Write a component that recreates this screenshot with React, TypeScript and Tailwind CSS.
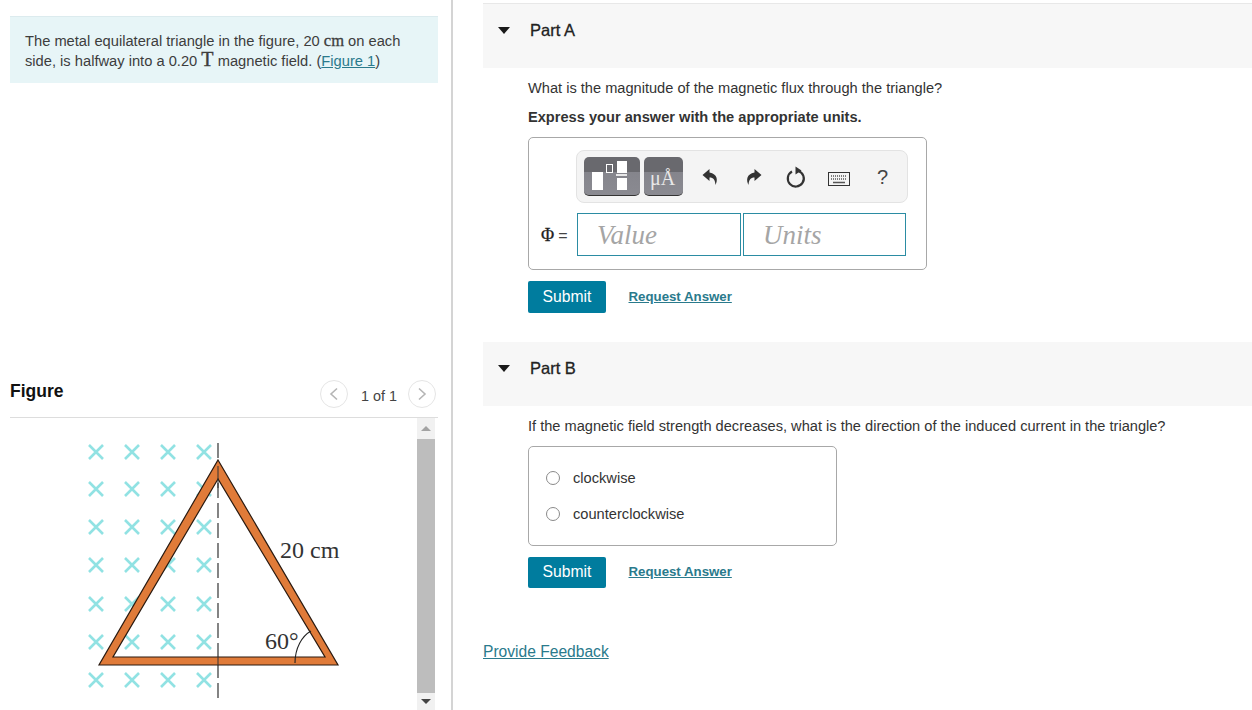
import React from "react";

const sans = "font-['Liberation_Sans',Arial,sans-serif]";
const serif = "font-['Liberation_Serif','Times_New_Roman',serif]";

function Crosses() {
  const xs = [96, 132, 168, 204];
  const ys = [452, 489, 527, 565, 604, 642, 680];
  return (
    <g stroke="#86dfe0" strokeWidth="2.6" opacity="0.9">
      {ys.flatMap((y) =>
        xs.map((x) => (
          <path key={`${x}-${y}`} d={`M${x - 7} ${y - 7}L${x + 7} ${y + 7}M${x + 7} ${y - 7}L${x - 7} ${y + 7}`} />
        ))
      )}
    </g>
  );
}

function Figure() {
  return (
    <svg viewBox="10 418 407 292" className="h-[292px] w-[407px] shrink-0">
      <Crosses />
      <path d="M218 443V700" stroke="#333" strokeWidth="1.2" strokeDasharray="15 5" fill="none" />
      <path fillRule="evenodd" d="M218 460L338 665H99ZM218 479L113 657H325Z" fill="#e07b39" stroke="#2a1a10" strokeWidth="1.2" />
      <path d="M218 466V488M218 657V665" stroke="#333" strokeWidth="1" />
      <text x="280" y="558" fontFamily="'Liberation Serif',serif" fontSize="24" fill="#333">20 cm</text>
      <text x="265" y="649" fontFamily="'Liberation Serif',serif" fontSize="24" fill="#333">60°</text>
      <path d="M295 663C295 648 302 636 311 631" stroke="#222" strokeWidth="1.1" fill="none" />
    </svg>
  );
}

function Scrollbar() {
  return (
    <div className="flex h-[292px] w-[18px] flex-col items-center bg-[#f1f1f1]">
      <div className="flex h-[21px] w-full items-center justify-center">
        <div className="h-0 w-0 border-x-[5px] border-b-[5px] border-x-transparent border-b-[#a3a3a3]" />
      </div>
      <div className="h-[254px] w-full bg-[#bdbdbd]" />
      <div className="flex grow items-center justify-center">
        <div className="h-0 w-0 border-x-[5px] border-t-[5px] border-x-transparent border-t-[#444]" />
      </div>
    </div>
  );
}

function PagerBtn({ dir }: { dir: "l" | "r" }) {
  return (
    <div className="flex h-[28px] w-[28px] items-center justify-center rounded-full border border-[#e5e5e5] bg-white">
      <svg width="10" height="14" viewBox="0 0 10 14" fill="none" stroke="#b5b5b5" strokeWidth="1.6">
        <path d={dir === "l" ? "M8 1.5L2 7l6 5.5" : "M2 1.5L8 7l-6 5.5"} />
      </svg>
    </div>
  );
}

function PartHeader({ title }: { title: string }) {
  return (
    <div className="flex h-[64px] items-center bg-[#f7f7f7] pb-[11px] pl-[15px]">
      <div className="h-0 w-0 border-x-[6px] border-t-[7px] border-x-transparent border-t-[#1a1a1a]" />
      <span className="ml-[20px] mb-[1px] text-[16.500px] font-medium text-[#222] [-webkit-text-stroke:0.3px_#222]">{title}</span>
    </div>
  );
}

function Actions({ tall }: { tall: boolean }) {
  return (
    <div className="flex items-center">
      <div className={`flex ${tall ? "h-[32px]" : "h-[31px] pb-[1px]"} w-[78px] items-center justify-center rounded-[2px] bg-[#007c9e] text-[15.700px] text-white`}>Submit</div>
      <a className={`ml-[22.500px] ${tall ? "" : "mb-[1px]"} text-[13.250px] font-bold text-[#2a7a8c] underline`}>Request Answer</a>
    </div>
  );
}

function Toolbar() {
  return (
    <div className="flex h-[53px] w-[332px] items-center rounded-[8px] border border-[#e3e3e3] bg-[#f4f4f4] pl-[7px]">
      <div className="relative h-[39px] w-[56px] overflow-hidden rounded-[5px] border-b border-[#333] bg-[linear-gradient(#69696e_0,#69696e_40%,#85858c_40%,#8a8a91_100%)]">
        <div className="absolute left-[8px] top-[15px] h-[18px] w-[11px] bg-white" />
        <div className="absolute left-[22px] top-[7px] h-[9px] w-[7px] border border-white" />
        <div className="absolute left-[33px] top-[4px] h-[12px] w-[10px] bg-white" />
        <div className="absolute left-[32px] top-[17px] h-[2px] w-[11px] bg-white opacity-80" />
        <div className="absolute left-[33px] top-[21px] h-[12px] w-[10px] bg-white" />
      </div>
      <div className="relative ml-[4px] h-[39px] w-[39px] overflow-hidden rounded-[5px] border-b border-[#333] bg-[linear-gradient(#69696e_0,#69696e_40%,#85858c_40%,#8a8a91_100%)]">
        <span className={`${serif} absolute bottom-[7px] left-[-1px] w-full text-center text-[20px] leading-none text-[#e8e8e8]`}>μÅ</span>
      </div>
      <svg className="ml-[19px]" width="17" height="18" viewBox="0 0 17 18" fill="#333">
        <path d="M7.500 1L0.500 7l7 6V9.500c4 0 5.500 2 6 7.500 2.500-5 2-11-6-12.500Z" />
      </svg>
      <svg className="ml-[26px]" width="17" height="18" viewBox="0 0 17 18" fill="#333">
        <path d="M9.500 1l7 6-7 6V9.500c-4 0-5.500 2-6 7.500-2.500-5-2-11 6-12.500Z" />
      </svg>
      <svg className="ml-[24px]" width="20" height="22" viewBox="0 0 20 22" fill="none" stroke="#333" strokeWidth="2.2">
        <path d="M6 5.500a8 8 0 1 0 6.500-.5" />
        <path d="M9.500 0.500v8l6-4Z" fill="#333" stroke="none" />
      </svg>
      <svg className="ml-[22px] mt-[4px]" width="22" height="14" viewBox="0 0 22 14">
        <rect x="0.500" y="0.500" width="21" height="13" fill="#f4f4f4" stroke="#333" />
        <path d="M3 4h16M3 7h16" stroke="#555" strokeWidth="1.600" strokeDasharray="1 1" />
        <path d="M5 10.500h12" stroke="#555" strokeWidth="1.500" />
      </svg>
      <span className="ml-[27px] text-[20px] text-[#444]">?</span>
    </div>
  );
}

export default function App() {
  return (
    <div className={`${sans} flex h-[710px] w-[1252px] overflow-hidden bg-white text-[#333]`}>
      <div className="flex h-full w-[453px] shrink-0 flex-col border-r-2 border-[#d4d4d4] pl-[10px] pr-[13px] pt-[16px]">
        <div className="h-[67px] w-[428px] border-t border-[#dcebee] bg-[#e7f5f7] pl-[15px] pt-[15px] text-[14.700px] leading-[18px] text-[#3d3d3d]">
          The metal equilateral triangle in the figure, 20 <span className={`${serif} text-[16.500px] font-medium [-webkit-text-stroke:0.3px_#3d3d3d]`}>cm</span> on each<br />
          side, is halfway into a 0.20 <span className={`${serif} text-[20px] leading-[18px] [-webkit-text-stroke:0.4px_#3d3d3d]`}>T</span> magnetic field. (<a className="text-[#2a7a8c] underline">Figure 1</a>)
        </div>
        <div className="mt-[294px] flex h-[41px] w-[428px] items-center justify-between border-b border-[#dddddd] pb-[6px]">
          <span className="mb-[6px] text-[17.500px] font-bold text-[#111]">Figure</span>
          <div className="flex items-center pr-[2px]">
            <PagerBtn dir="l" />
            <span className="ml-[13px] mr-[11px] mt-[5px] text-[14.400px] text-[#444]">1 of 1</span>
            <PagerBtn dir="r" />
          </div>
        </div>
        <div className="flex h-[292px] w-[428px] items-start overflow-hidden">
          <Figure />
          <div className="shrink-0 self-start"><Scrollbar /></div>
        </div>
      </div>

      <div className="ml-[30px] flex min-w-0 grow flex-col pt-[3px]">
        <div className="border-t border-[#e8e8e8]">
          <PartHeader title="Part A" />
        </div>
        <div className="pl-[45px]">
          <p className="mt-[11px] text-[14.620px] leading-[18px] text-[#333]">What is the magnitude of the magnetic flux through the triangle?</p>
          <p className="mt-[11px] text-[14.620px] font-bold leading-[18px] text-[#333]">Express your answer with the appropriate units.</p>
          <div className="mt-[11px] h-[133px] w-[399px] rounded-[5px] border border-[#a8a8a8] pl-[47px] pt-[12px]">
            <Toolbar />
            <div className="relative mt-[10px] flex pl-[1px]">
              <span className={`${serif} absolute left-[-35px] top-[9px] text-[16px] text-[#444]`}><span className="text-[18px] text-[#222] [-webkit-text-stroke:0.3px_#222]">Φ</span> <span className={sans}>=</span></span>
              <div className={`${serif} flex h-[43px] w-[164px] items-center border border-[#2b8ca3] pl-[19px] pt-[2px] text-[27px] italic text-[#a5a5a5]`}>Value</div>
              <div className={`${serif} ml-[2px] flex h-[43px] w-[163px] items-center border border-[#2b8ca3] pl-[19px] pt-[2px] text-[27px] italic text-[#a5a5a5]`}>Units</div>
            </div>
          </div>
          <div className="mt-[11px]"><Actions tall /></div>
        </div>

        <div className="mt-[29px]">
          <PartHeader title="Part B" />
        </div>
        <div className="pl-[45px]">
          <p className="mt-[11px] text-[14.620px] leading-[18px] text-[#333]">If the magnetic field strength decreases, what is the direction of the induced current in the triangle?</p>
          <div className="mt-[11px] flex h-[100px] w-[309px] flex-col justify-center gap-[18px] rounded-[5px] border border-[#a8a8a8] pl-[17px]">
            {["clockwise", "counterclockwise"].map((t) => (
              <div key={t} className="flex h-[18px] items-center">
                <div className="h-[14px] w-[14px] rounded-full border-[1.500px] border-[#8a8a8a]" />
                <span className="ml-[13px] mt-[2px] text-[14.650px] text-[#333]">{t}</span>
              </div>
            ))}
          </div>
          <div className="mt-[11px]"><Actions tall={false} /></div>
        </div>
        <a className="mt-[54px] text-[15.600px] leading-[20px] text-[#2a7a8c] underline">Provide Feedback</a>
      </div>
    </div>
  );
}
